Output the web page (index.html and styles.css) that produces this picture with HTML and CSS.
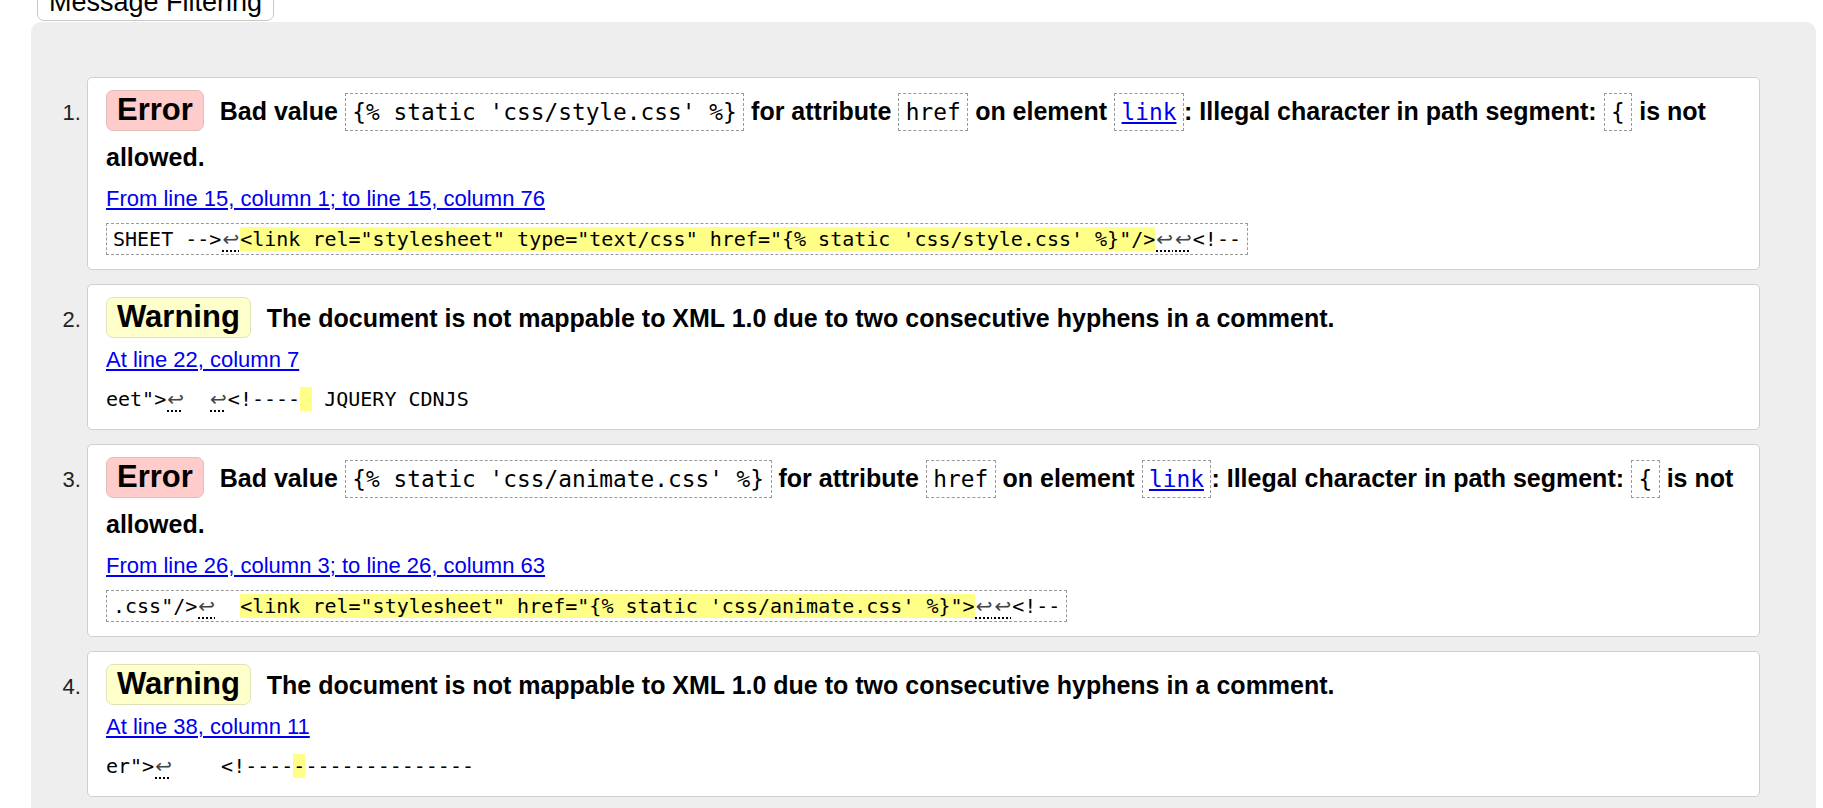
FILE: index.html
```html
<!DOCTYPE html>
<html lang="en">
<head>
<meta charset="utf-8">
<title>Validation results</title>
<link rel="stylesheet" href="styles.css">
</head>
<body>
<button class="filter-btn" type="button">Message Filtering</button>
<div class="results">
  <ol class="messages">
    <li class="msg error">
      <p class="msg-text"><strong class="badge">Error</strong> Bad value <code class="val">{% static 'css/style.css' %}</code> for attribute <code class="val">href</code> on element <code class="val"><a href="#">link</a></code>: Illegal character in path segment: <code class="val">{</code> is not allowed.</p>
      <p class="location"><a href="#">From line 15, column 1; to line 15, column 76</a></p>
      <p class="extract"><code>SHEET --&gt;<span class="lf">↩</span><mark>&lt;link rel="stylesheet" type="text/css" href="{% static 'css/style.css' %}"/&gt;</mark><span class="lf">↩</span><span class="lf">↩</span>&lt;!--</code></p>
    </li>
    <li class="msg warning">
      <p class="msg-text"><strong class="badge">Warning</strong> The document is not mappable to XML 1.0 due to two consecutive hyphens in a comment.</p>
      <p class="location"><a href="#">At line 22, column 7</a></p>
      <p class="extract"><code>eet"&gt;<span class="lf">↩</span>  <span class="lf">↩</span>&lt;!----<mark> </mark> JQUERY CDNJS</code></p>
    </li>
    <li class="msg error">
      <p class="msg-text"><strong class="badge">Error</strong> Bad value <code class="val">{% static 'css/animate.css' %}</code> for attribute <code class="val">href</code> on element <code class="val"><a href="#">link</a></code>: Illegal character in path segment: <code class="val">{</code> is not allowed.</p>
      <p class="location"><a href="#">From line 26, column 3; to line 26, column 63</a></p>
      <p class="extract"><code>.css"/&gt;<span class="lf">↩</span>  <mark>&lt;link rel="stylesheet" href="{% static 'css/animate.css' %}"&gt;</mark><span class="lf">↩</span><span class="lf">↩</span>&lt;!--</code></p>
    </li>
    <li class="msg warning">
      <p class="msg-text"><strong class="badge">Warning</strong> The document is not mappable to XML 1.0 due to two consecutive hyphens in a comment.</p>
      <p class="location"><a href="#">At line 38, column 11</a></p>
      <p class="extract"><code>er"&gt;<span class="lf">↩</span>    &lt;!----<mark>-</mark>--------------</code></p>
    </li>
  </ol>
</div>
</body>
</html>
```

FILE: styles.css
```css
html, body {
  margin: 0;
  overflow: hidden;
  background: #fff;
}

body {
  padding: 0 7px 0 31px;
  font-family: "Liberation Sans", Arial, sans-serif;
  color: #000;
}

.filter-btn {
  display: block;
  margin: -16px 0 0 6px;
  padding: 2px 11px;
  font-family: "Liberation Sans", Arial, sans-serif;
  font-size: 27px;
  line-height: normal;
  color: #000;
  background: #fff;
  border: 1px solid #c8c8c8;
  border-radius: 7px;
}

.results {
  margin-top: 1px;
  padding: 55px 56px 60px;
  background: #eee;
  border-radius: 10px 10px 0 0;
}

.messages {
  margin: 0;
  padding: 0;
  list-style: decimal outside;
}

.msg {
  margin-bottom: 14px;
  padding: 11px 10px 18px 18px;
  background: #fff;
  border: 1px solid #cfcfcf;
  border-radius: 5px;
  font-size: 22px;
}

.msg::marker {
  font-family: "Liberation Sans", Arial, sans-serif;
  font-size: 22px;
  color: #222;
}

.msg p {
  margin: 0;
}

.msg-text {
  font-size: 25px;
  font-weight: bold;
  line-height: 45px;
}

.badge {
  display: inline-block;
  margin-right: 9px;
  padding: 1.5px 10px;
  font-size: 31px;
  line-height: normal;
  border: 1px solid;
  border-radius: 7px;
}

.error .badge {
  background: #fcc;
  border-color: #e3bcbc;
}

.warning .badge {
  background: #ffc;
  border-color: #e2e2b8;
}

code.val {
  padding: 5px 6.5px;
  font-family: "DejaVu Sans Mono", monospace;
  font-size: 22.8px;
  font-weight: normal;
  border: 1px dashed #9a9a9a;
}

a {
  color: #00e;
  text-decoration: underline;
}

.msg .location {
  margin-top: 6px;
  font-size: 22px;
  line-height: normal;
}

.msg .extract {
  margin-top: 14px;
  font-family: "DejaVu Sans Mono", monospace;
  font-size: 20px;
  line-height: normal;
  white-space: pre;
}

.error .extract {
  margin-top: 15px;
}

.extract code {
  font-family: "DejaVu Sans Mono", monospace;
  font-size: 20px;
}

.error .extract code {
  padding: 3px 6px;
  border: 1px dashed #9a9a9a;
}

.extract mark {
  background: #ff8;
  color: #000;
}

.lf {
  padding: 0 1px;
  font-family: "DejaVu Sans", sans-serif;
  color: #444;
  text-decoration: underline dotted #000;
  text-underline-offset: 4px;
}
```
